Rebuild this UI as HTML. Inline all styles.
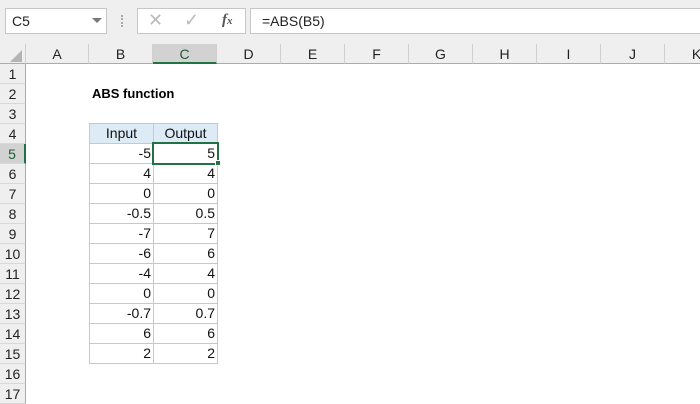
<!DOCTYPE html>
<html><head><style>
body{margin:0;width:700px;height:400px;overflow:hidden;background:#fff;font-family:"Liberation Sans",sans-serif;position:relative}
div{position:absolute;box-sizing:border-box}
.t{background:#efefef;left:0;top:0;width:700px;height:44px}
.box{background:#fff;border:1px solid #c6c6c6;top:8px;height:26px}
.ch{top:44px;height:20px;background:#efefef;border-bottom:1px solid #ababab;border-right:1px solid #d0d0d0;text-align:center;font-size:14px;line-height:21px;color:#222}
.rh{left:0;width:26px;height:20px;background:#efefef;border-right:1px solid #ababab;border-bottom:1px solid #d8d8d8;text-align:center;font-size:14px;line-height:20px;color:#222}
.c{height:21px;width:65px;border:1px solid #c8c8c8;font-size:14px;line-height:19px;text-align:right;padding-right:2px;color:#111}
</style></head><body>
<div class="t"></div>
<div class="box" style="left:5px;width:102px;font-size:14px;line-height:24px;padding-left:6px;color:#222">C5</div>
<div style="left:92px;top:18px;width:0;height:0;border-left:5px solid transparent;border-right:5px solid transparent;border-top:5px solid #777"></div>
<div style="left:121px;top:15px;width:2px;height:12px;border-left:2px dotted #aaa"></div>
<div class="box" style="left:137px;width:109px"></div>
<div style="left:148px;top:10px;font-size:18px;color:#bbb">✕</div>
<div style="left:184px;top:10px;font-size:18px;color:#bbb">✓</div>
<div style="left:222px;top:12px;font-size:15px;font-style:italic;font-weight:bold;font-family:'Liberation Serif',serif;color:#555">f<span style="font-size:11px">x</span></div>
<div class="box" style="left:250px;width:460px;font-size:14px;line-height:24px;padding-left:11px;color:#222">=ABS(B5)</div>
<div class="ch" style="left:0;width:26px"></div>
<div style="left:10px;top:50px;width:0;height:0;border-left:12px solid transparent;border-bottom:12px solid #b4b4b4"></div>
<div class="ch" style="left:26px;width:63px">A</div>
<div class="ch" style="left:89px;width:64px">B</div>
<div class="ch" style="left:153px;width:64px;background:#d2d2d2;border-bottom:2px solid #217346;color:#1d5c37">C</div>
<div class="ch" style="left:217px;width:64px">D</div>
<div class="ch" style="left:281px;width:64px">E</div>
<div class="ch" style="left:345px;width:64px">F</div>
<div class="ch" style="left:409px;width:64px">G</div>
<div class="ch" style="left:473px;width:64px">H</div>
<div class="ch" style="left:537px;width:64px">I</div>
<div class="ch" style="left:601px;width:64px">J</div>
<div class="ch" style="left:665px;width:64px">K</div>
<div class="rh" style="top:64px">1</div>
<div class="rh" style="top:84px">2</div>
<div class="rh" style="top:104px">3</div>
<div class="rh" style="top:124px">4</div>
<div class="rh" style="top:144px;background:#d2d2d2;border-right:2px solid #217346;color:#1d5c37">5</div>
<div class="rh" style="top:164px">6</div>
<div class="rh" style="top:184px">7</div>
<div class="rh" style="top:204px">8</div>
<div class="rh" style="top:224px">9</div>
<div class="rh" style="top:244px">10</div>
<div class="rh" style="top:264px">11</div>
<div class="rh" style="top:284px">12</div>
<div class="rh" style="top:304px">13</div>
<div class="rh" style="top:324px">14</div>
<div class="rh" style="top:344px">15</div>
<div class="rh" style="top:364px">16</div>
<div class="rh" style="top:384px">17</div>
<div style="left:92px;top:85px;font-size:13px;font-weight:bold;line-height:18px">ABS function</div>
<div class="c" style="left:89px;top:123px;background:#ddebf7;text-align:center;padding:0">Input</div>
<div class="c" style="left:153px;top:123px;background:#ddebf7;text-align:center;padding:0">Output</div>
<div class="c" style="left:89px;top:143px">-5</div><div class="c" style="left:153px;top:143px">5</div>
<div class="c" style="left:89px;top:163px">4</div><div class="c" style="left:153px;top:163px">4</div>
<div class="c" style="left:89px;top:183px">0</div><div class="c" style="left:153px;top:183px">0</div>
<div class="c" style="left:89px;top:203px">-0.5</div><div class="c" style="left:153px;top:203px">0.5</div>
<div class="c" style="left:89px;top:223px">-7</div><div class="c" style="left:153px;top:223px">7</div>
<div class="c" style="left:89px;top:243px">-6</div><div class="c" style="left:153px;top:243px">6</div>
<div class="c" style="left:89px;top:263px">-4</div><div class="c" style="left:153px;top:263px">4</div>
<div class="c" style="left:89px;top:283px">0</div><div class="c" style="left:153px;top:283px">0</div>
<div class="c" style="left:89px;top:303px">-0.7</div><div class="c" style="left:153px;top:303px">0.7</div>
<div class="c" style="left:89px;top:323px">6</div><div class="c" style="left:153px;top:323px">6</div>
<div class="c" style="left:89px;top:343px">2</div><div class="c" style="left:153px;top:343px">2</div>
<div style="left:152px;top:142px;width:67px;height:23px;border:2px solid #217346"></div>
<div style="left:215px;top:160px;width:6px;height:6px;background:#217346;border:1px solid #fff"></div>
</body></html>
